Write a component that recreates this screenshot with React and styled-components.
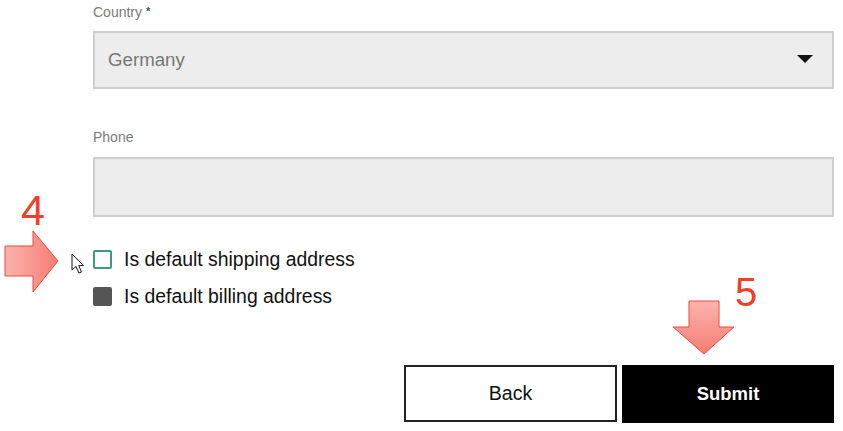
import React from "react";
import styled, { createGlobalStyle } from "styled-components";

const Global = createGlobalStyle`
  html, body { margin: 0; padding: 0; background: #fff; }
  body { font-family: "Liberation Sans", Arial, sans-serif; }
  * { box-sizing: border-box; }
`;

const Page = styled.div`
  position: relative;
  width: 843px;
  height: 431px;
  overflow: hidden;
  background: #fff;
`;

const Form = styled.div`
  display: flex;
  flex-direction: column;
  width: 741px;
  margin-left: 93px;
  padding-top: 0;
`;

const Field = styled.div`
  display: flex;
  flex-direction: column;
  gap: 11px;
  margin-bottom: ${(p) => p.$mb || 0}px;
`;

const Label = styled.label`
  font-size: 14px;
  line-height: 18px;
  height: 20px;
  padding-top: 2px;
  color: #7a7a7a;
`;

const Req = styled.span`
  color: #2f5f58;
  font-weight: bold;
  font-size: 11px;
  vertical-align: 2px;
`;

const Box = styled.div`
  height: ${(p) => p.$h}px;
  background: #ededed;
  border: 2px solid #cfcfcf;
  display: flex;
  align-items: center;
  justify-content: space-between;
  padding: 0 19px 0 13px;
  font-size: 18.7px;
  color: #777;
`;

const Caret = styled.span`
  width: 0;
  height: 0;
  margin-top: -2px;
  border-left: 8px solid transparent;
  border-right: 8px solid transparent;
  border-top: 8px solid #111;
`;

const Checks = styled.div`
  display: flex;
  flex-direction: column;
  gap: 18px;
  margin-top: 33px;
`;

const CheckRow = styled.div`
  display: flex;
  align-items: center;
  gap: 12px;
  font-size: 19.4px;
  color: #111;
  height: 19px;
`;

const CheckBox = styled.span`
  flex: none;
  width: 19px;
  height: 19px;
  border-radius: 2px;
  border: 2px solid ${(p) => (p.$filled ? "#555" : "#3d9a80")};
  background: ${(p) => (p.$filled ? "#555" : "#fff")};
`;

const Buttons = styled.div`
  display: flex;
  justify-content: flex-end;
  align-items: flex-start;
  gap: 5px;
  margin-top: 59px;
`;

const Button = styled.button`
  width: ${(p) => (p.$primary ? 212 : 213)}px;
  height: ${(p) => (p.$primary ? 58 : 57)}px;
  font-family: "Liberation Sans", Arial, sans-serif;
  font-size: ${(p) => (p.$primary ? 18.5 : 19.6)}px;
  font-weight: ${(p) => (p.$primary ? "bold" : "normal")};
  color: ${(p) => (p.$primary ? "#fff" : "#111")};
  background: ${(p) => (p.$primary ? "#000" : "#fff")};
  border: 2px solid ${(p) => (p.$primary ? "#000" : "#222")};
  padding: 0;
`;

const Num = styled.span`
  position: absolute;
  left: ${(p) => p.$x}px;
  top: ${(p) => p.$y}px;
  font-size: ${(p) => p.$s}px;
  line-height: 1;
  color: #f0402c;
  font-family: "Liberation Sans", Arial, sans-serif;
`;

const Overlay = styled.svg`
  position: absolute;
  left: ${(p) => p.$x}px;
  top: ${(p) => p.$y}px;
`;

export default function App() {
  return (
    <Page>
      <Global />
      <Form>
        <Field $mb={37}>
          <Label>
            Country <Req>*</Req>
          </Label>
          <Box $h={58}>
            Germany
            <Caret />
          </Box>
        </Field>
        <Field>
          <Label>Phone</Label>
          <Box $h={60} />
        </Field>
        <Checks>
          <CheckRow>
            <CheckBox />
            Is default shipping address
          </CheckRow>
          <CheckRow>
            <CheckBox $filled />
            Is default billing address
          </CheckRow>
        </Checks>
        <Buttons>
          <Button>Back</Button>
          <Button $primary>Submit</Button>
        </Buttons>
      </Form>

      <Num $x={21} $y={189} $s={43}>4</Num>
      <Overlay $x={0} $y={225} width="64" height="72" viewBox="0 225 64 72">
        <defs>
          <linearGradient id="ga" x1="0" x2="1" y1="0" y2="0">
            <stop offset="0" stopColor="#fbb3ad" />
            <stop offset="1" stopColor="#f57d74" />
          </linearGradient>
        </defs>
        <polygon
          points="5,246 33,246 33,231 58,261 33,292 33,276 5,276"
          fill="url(#ga)"
          stroke="#ea4a3e"
          strokeWidth="1"
        />
      </Overlay>

      <Overlay $x={68} $y={250} width="22" height="30" viewBox="0 0 22 30">
        <path
          d="M4 4 L4 20 L8 16.5 L11 23 L13.5 22 L10.7 15.6 L15.5 15.6 Z"
          fill="#fff"
          stroke="#111"
          strokeWidth="1"
          strokeLinejoin="round"
        />
      </Overlay>

      <Num $x={735} $y={272} $s={40}>5</Num>
      <Overlay $x={668} $y={296} width="72" height="64" viewBox="668 296 72 64">
        <defs>
          <linearGradient id="gb" x1="0" x2="0" y1="0" y2="1">
            <stop offset="0" stopColor="#fbb3ad" />
            <stop offset="1" stopColor="#f57d74" />
          </linearGradient>
        </defs>
        <polygon
          points="689,301 719,301 719,327 734,327 704,354 673,327 689,327"
          fill="url(#gb)"
          stroke="#ea4a3e"
          strokeWidth="1"
        />
      </Overlay>
    </Page>
  );
}
